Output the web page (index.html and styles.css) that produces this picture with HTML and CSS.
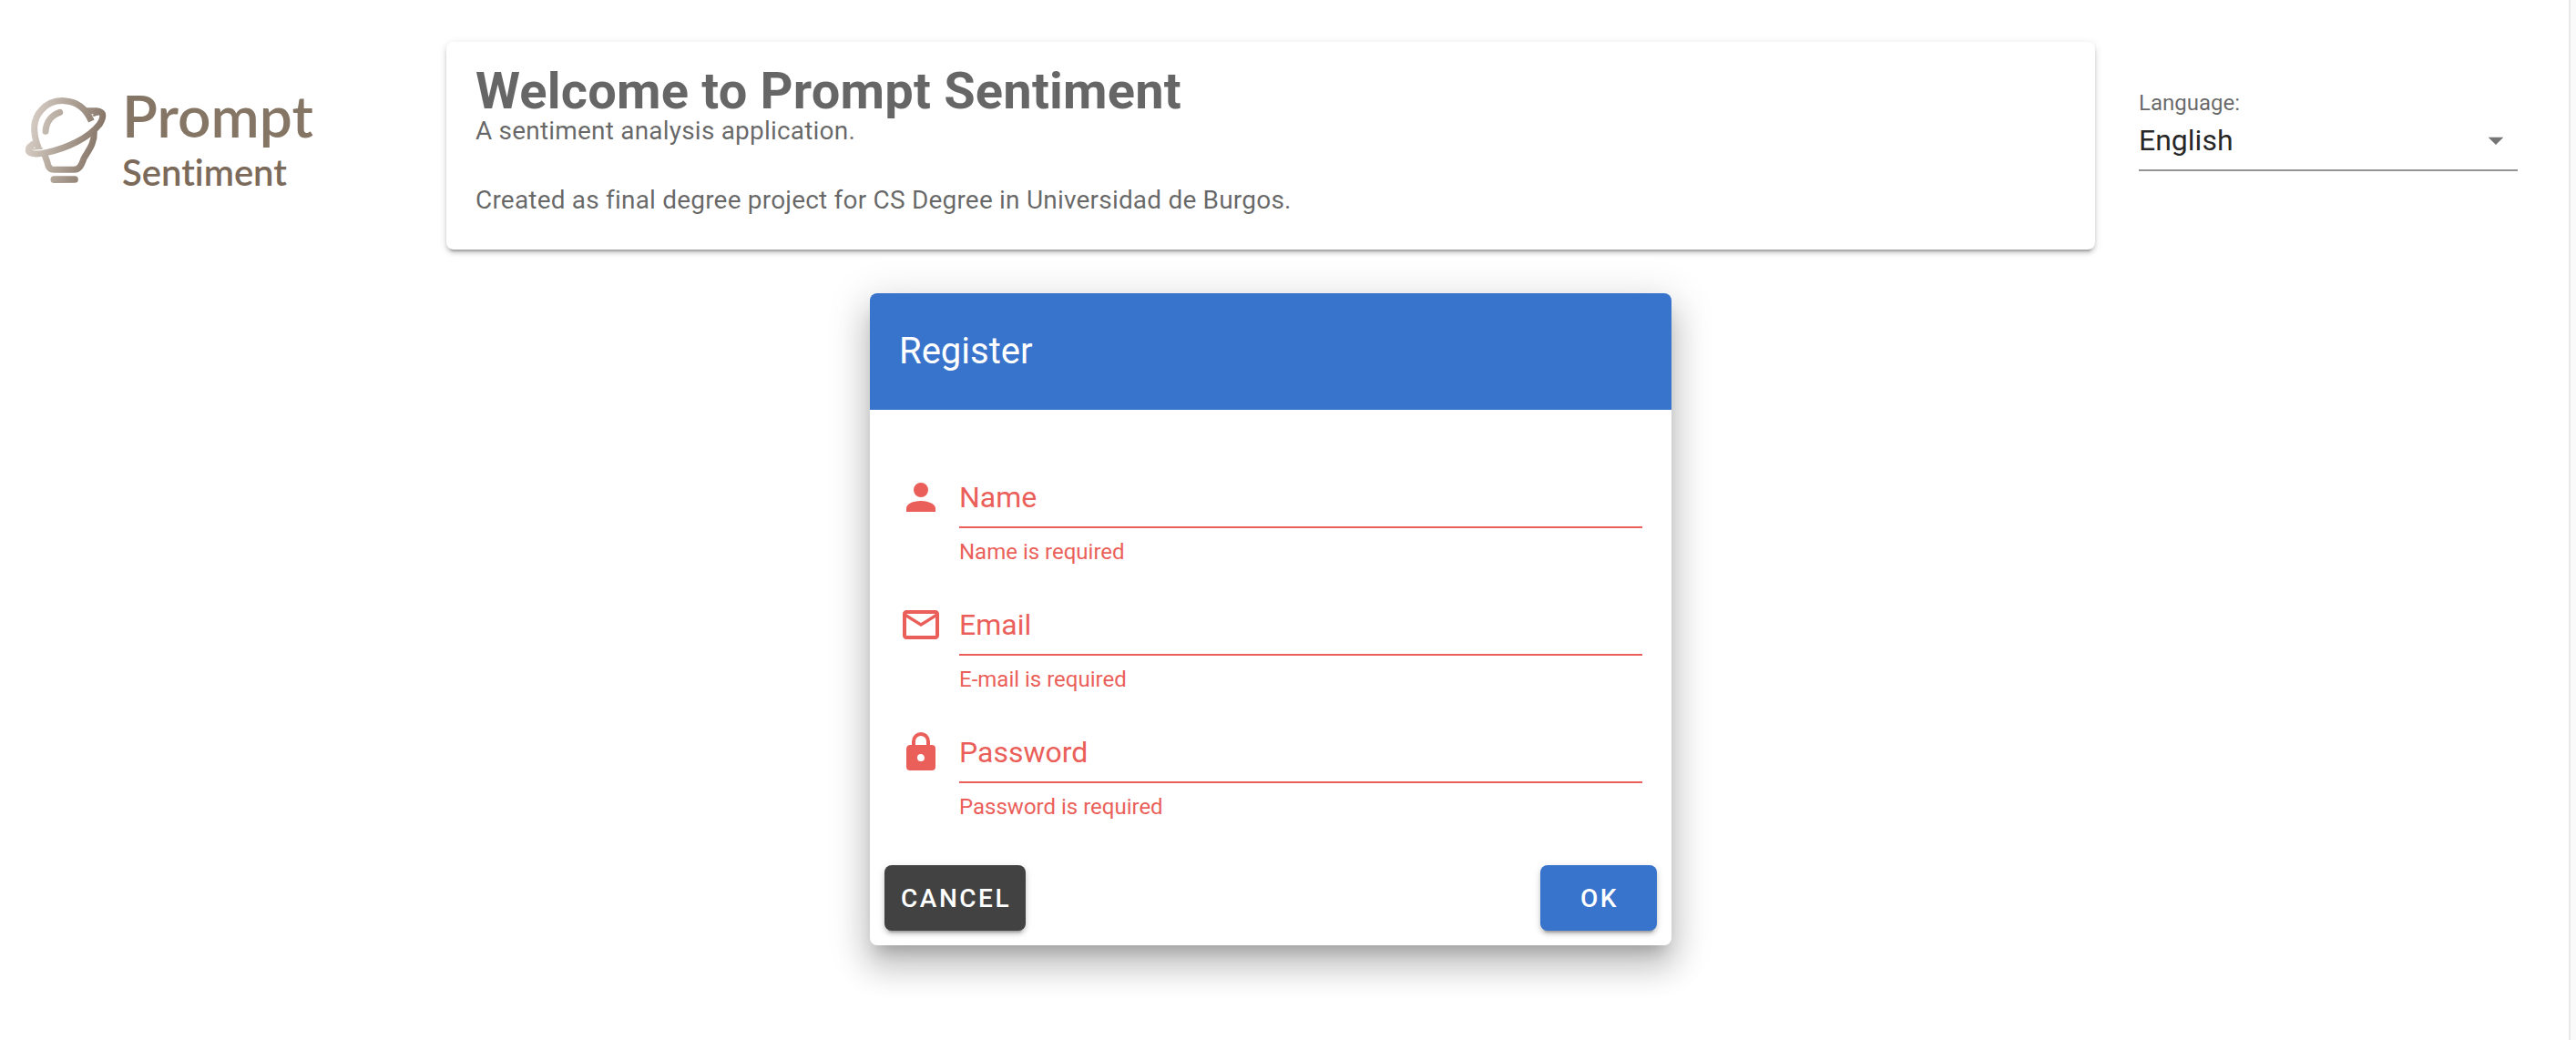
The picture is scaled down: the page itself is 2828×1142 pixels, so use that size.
FILE: index.html
```html
<!DOCTYPE html>
<html lang="en">
<head>
<meta charset="utf-8">
<title>Prompt Sentiment</title>
<link rel="stylesheet" href="styles.css">
</head>
<body>
<div class="app">
  <div class="page">
    <div class="logo">
      <svg class="logo-mark" viewBox="0 0 330 345" aria-hidden="true">
        <defs>
          <linearGradient id="metal" gradientUnits="userSpaceOnUse" x1="25" y1="150" x2="290" y2="210">
            <stop offset="0" stop-color="#d8cfc7"/>
            <stop offset="0.5" stop-color="#ab9e92"/>
            <stop offset="1" stop-color="#7d6c5e"/>
          </linearGradient>
        </defs>
        <g fill="none" stroke="url(#metal)" stroke-width="21">
          <path d="M67 203C46 150 48 108 76 78C102 48 135 46 152 47C192 49 222 70 241 114"/>
          <path d="M222 80L258 80C282 82 284 98 268 124C232 170 160 203 95 217C54 226 32 222 34 206C35 196 44 196 54 186"/>
          <path d="M248 98C250 90 260 92 268 90" stroke-width="8"/>
          <path d="M44 205C52 208 64 204 80 203" stroke-width="6"/>
          <path d="M250 148C252 190 228 214 216 237C208 262 200 273 184 274L116 274C102 274 98 262 96 250L86 222"/>
          <path d="M90 148C92 116 110 94 137 85" stroke-linecap="round"/>
          <path d="M118 306.5L186 306" stroke-width="23" stroke-linecap="round"/>
        </g>
      </svg>
      <div class="logo-text">
        <span class="logo-name">Prompt</span>
        <span class="logo-sub">Sentiment</span>
      </div>
    </div>

    <main class="content">
      <section class="welcome">
        <h1 class="welcome-title">Welcome to Prompt Sentiment</h1>
        <p class="welcome-text">A sentiment analysis application.<br><br>Created as final degree project for CS Degree in Universidad de Burgos.</p>
      </section>

      <form class="register" novalidate>
        <h2 class="register-title">Register</h2>
        <div class="fields">
          <div class="field">
            <svg class="icon" viewBox="0 0 24 24" aria-hidden="true"><path d="M12 4A4 4 0 0 1 16 8A4 4 0 0 1 12 12A4 4 0 0 1 8 8A4 4 0 0 1 12 4M12 14C16.42 14 20 15.79 20 18V20H4V18C4 15.79 7.58 14 12 14Z"/></svg>
            <label class="field-label" for="name">Name</label>
            <input class="field-input" id="name" type="text" aria-describedby="name-error">
            <p class="field-error" id="name-error">Name is required</p>
          </div>
          <div class="field">
            <svg class="icon" viewBox="0 0 24 24" aria-hidden="true"><path d="M22 6C22 4.9 21.1 4 20 4H4C2.9 4 2 4.9 2 6V18C2 19.1 2.9 20 4 20H20C21.1 20 22 19.1 22 18V6M20 6L12 11L4 6H20M20 18H4V8L12 13L20 8V18Z"/></svg>
            <label class="field-label" for="email">Email</label>
            <input class="field-input" id="email" type="email" aria-describedby="email-error">
            <p class="field-error" id="email-error">E-mail is required</p>
          </div>
          <div class="field">
            <svg class="icon" viewBox="0 0 24 24" aria-hidden="true"><path d="M12 17A2 2 0 0 0 14 15C14 13.89 13.1 13 12 13A2 2 0 0 0 10 15A2 2 0 0 0 12 17M18 8A2 2 0 0 1 20 10V20A2 2 0 0 1 18 22H6A2 2 0 0 1 4 20V10C4 8.89 4.9 8 6 8H7V6A5 5 0 0 1 12 1A5 5 0 0 1 17 6V8H18M12 3A3 3 0 0 0 9 6V8H15V6A3 3 0 0 0 12 3Z"/></svg>
            <label class="field-label" for="password">Password</label>
            <input class="field-input" id="password" type="password" aria-describedby="password-error">
            <p class="field-error" id="password-error">Password is required</p>
          </div>
        </div>
        <div class="actions">
          <button class="btn btn-dark" type="button">CANCEL</button>
          <button class="btn btn-primary" type="submit">OK</button>
        </div>
      </form>
    </main>

    <div class="language">
      <label class="language-label" for="language">Language:</label>
      <div class="select">
        <select class="select-input" id="language">
          <option>English</option>
          <option>Español</option>
        </select>
        <svg class="select-arrow" viewBox="0 0 24 24" aria-hidden="true"><path d="M7 10L12 15L17 10H7Z"/></svg>
      </div>
    </div>
  </div>
  <div class="track"></div>
</div>
</body>
</html>
```
FILE: styles.css
```css
:root {
  --primary: #3873cc;
  --error: #eb5f5a;
  --muted: rgba(0, 0, 0, 0.6);
}

* {
  box-sizing: border-box;
}

body {
  margin: 0;
  background: #fff;
  color: rgba(0, 0, 0, 0.87);
  font-family: Roboto, "Liberation Sans", sans-serif;
}

h1,
h2,
p {
  margin: 0;
}

.app {
  display: flex;
  min-height: 100vh;
}

.page {
  flex: 1;
  min-width: 0;
  display: grid;
  grid-template-columns: minmax(0, 418fr) minmax(0, 1810fr) minmax(0, 416fr);
  column-gap: 48px;
  align-items: start;
  padding: 46px 56px 46px 24px;
}

.track {
  width: 8px;
  border-left: 2px solid #e8e8e8;
  background: #fafafa;
}

/* Logo */
.logo {
  display: flex;
  align-items: flex-start;
  gap: 4px;
  padding-top: 49px;
}

.logo-mark {
  flex: none;
  width: 110px;
  height: 115px;
  margin-left: -4px;
}

.logo-text {
  display: flex;
  flex-direction: column;
  gap: 6px;
  font-family: Lato, "Open Sans", sans-serif;
  font-weight: 600;
  font-variant-ligatures: none;
}

.logo-name {
  font-size: 64px;
  line-height: 64px;
  color: #857564;
}

.logo-sub {
  font-size: 40px;
  line-height: 48px;
  color: #7b6a5a;
}

/* Middle column */
.content {
  display: flex;
  flex-direction: column;
  align-items: center;
  gap: 48px;
}

.welcome {
  width: 100%;
  padding: 32px;
  border-radius: 8px;
  background: #fff;
  color: var(--muted);
  font-size: 28px;
  letter-spacing: 0.007em;
  box-shadow: 0 6px 2px -4px rgba(0, 0, 0, 0.2), 0 4px 4px 0 rgba(0, 0, 0, 0.14), 0 2px 10px 0 rgba(0, 0, 0, 0.12);
}

.welcome-title {
  padding-bottom: 3px;
  font-size: 56px;
  line-height: 44px;
  font-weight: 700;
}

.welcome-text {
  padding-bottom: 3px;
  line-height: 38px;
}

/* Register card */
.register {
  width: 100%;
  max-width: 880px;
  border-radius: 8px;
  background: #fff;
  box-shadow: 0 14px 16px -8px rgba(0, 0, 0, 0.2), 0 24px 34px 4px rgba(0, 0, 0, 0.14), 0 10px 44px 8px rgba(0, 0, 0, 0.12);
}

.register-title {
  padding: 40px 32px;
  border-radius: 8px 8px 0 0;
  background: var(--primary);
  color: #fff;
  font-size: 40px;
  line-height: 48px;
  font-weight: 400;
}

.fields {
  display: flex;
  flex-direction: column;
  gap: 38px;
  padding: 66px 32px 36px;
  color: var(--error);
}

.field {
  display: grid;
  grid-template-columns: 48px minmax(0, 1fr);
  column-gap: 18px;
  row-gap: 14px;
}

.icon {
  width: 48px;
  height: 48px;
  margin-top: 6px;
  fill: currentColor;
}

.field-label,
.field-input {
  grid-area: 1 / 2;
  height: 64px;
  font-size: 32px;
  line-height: 40px;
}

.field-label {
  padding-top: 10px;
}

.field-input {
  width: 100%;
  padding: 10px 0 12px;
  border: 0;
  border-bottom: 2px solid var(--error);
  border-radius: 0;
  outline: 0;
  background: transparent;
  color: inherit;
  font-family: inherit;
}

.field-error {
  grid-column: 2;
  font-size: 24px;
  line-height: 24px;
}

.actions {
  display: flex;
  justify-content: space-between;
  padding: 16px;
}

.btn {
  min-width: 128px;
  height: 72px;
  padding: 0 16px 0 18px;
  border: 0;
  border-radius: 8px;
  color: #fff;
  font-family: inherit;
  font-size: 28px;
  font-weight: 500;
  letter-spacing: 0.09em;
  box-shadow: 0 6px 2px -4px rgba(0, 0, 0, 0.2), 0 4px 4px 0 rgba(0, 0, 0, 0.14), 0 2px 10px 0 rgba(0, 0, 0, 0.12);
}

.btn-dark {
  background: #424242;
}

.btn-primary {
  background: var(--primary);
}

/* Language picker */
.language {
  display: flex;
  flex-direction: column;
  gap: 9px;
  padding-top: 55px;
}

.language-label {
  color: var(--muted);
  font-size: 24px;
  line-height: 24px;
}

.select {
  display: grid;
  align-items: start;
}

.select-input {
  grid-area: 1 / 1;
  appearance: none;
  width: 100%;
  height: 54px;
  padding: 0 48px 12px 0;
  border: 0;
  border-bottom: 2px solid #949494;
  border-radius: 0;
  background: transparent;
  color: inherit;
  font-family: inherit;
  font-size: 32px;
  line-height: 40px;
}

.select-arrow {
  grid-area: 1 / 1;
  justify-self: end;
  width: 48px;
  height: 40px;
  fill: #757575;
  pointer-events: none;
}
```
